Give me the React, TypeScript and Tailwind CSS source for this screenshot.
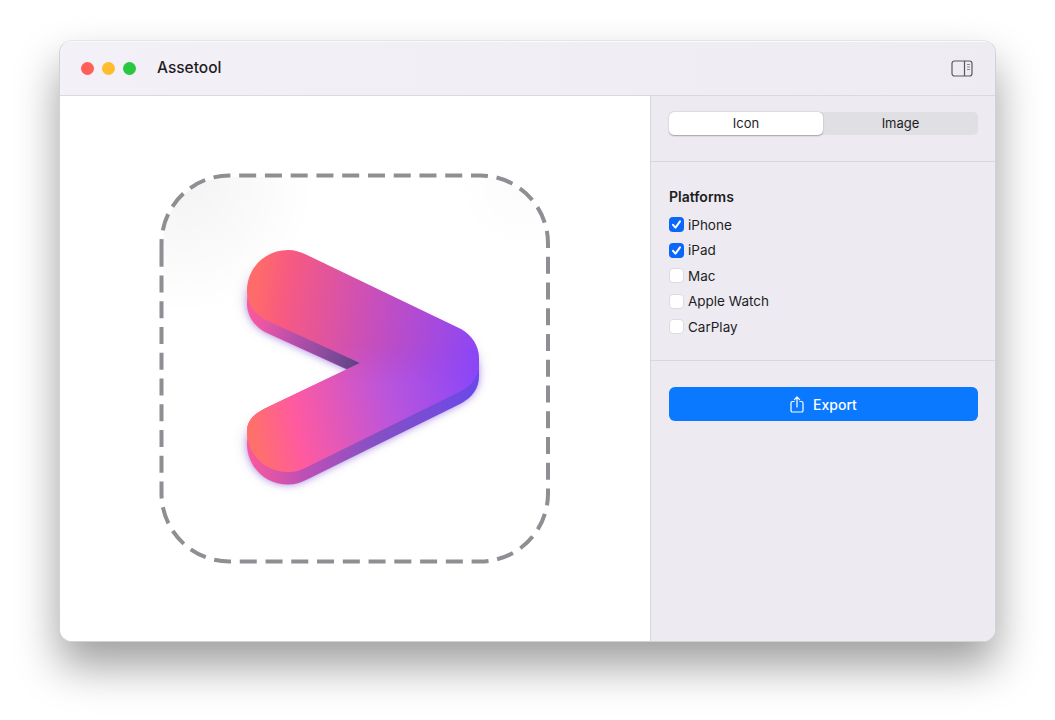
import React from 'react';

const FACE =
  'M247 291C247 268 265 250 288 250C295 250 301 252 307 255L461 329C472 335 479 346 479 358V364C479 376 472 385 461 391L307 467C301 470 295 472 288 472C265 472 247 454 247 431C247 420 255 413 268 407L360 363L268 321C255 315 247 304 247 291Z';

// starts on the left side so the seam of the dashes falls where the original has it
const DASH_OUTLINE =
  'M161.5 256V243.5A68 68 0 0 1 229.5 175.5H480A68 68 0 0 1 548 243.5V493.5A68 68 0 0 1 480 561.5H229.5A68 68 0 0 1 161.5 493.5Z';

const PLATFORMS = [
  { name: 'iPhone', checked: true },
  { name: 'iPad', checked: true },
  { name: 'Mac', checked: false },
  { name: 'Apple Watch', checked: false },
  { name: 'CarPlay', checked: false },
];

const ArtworkDrop: React.FC = () => (
  <svg width="590" height="545" viewBox="60 96 590 545" className="block">
    <defs>
      <linearGradient id="face" gradientUnits="userSpaceOnUse" x1="250" y1="340" x2="480" y2="370">
        <stop offset="0" stopColor="#ff6a6a" />
        <stop offset="0.12" stopColor="#f85a80" />
        <stop offset="0.5" stopColor="#c94fba" />
        <stop offset="1" stopColor="#8a46f8" />
      </linearGradient>
      <linearGradient id="faceLow" gradientUnits="userSpaceOnUse" x1="250" y1="430" x2="480" y2="385">
        <stop offset="0" stopColor="#ff7168" />
        <stop offset="0.2" stopColor="#ff5aa0" />
        <stop offset="0.6" stopColor="#bb55db" />
        <stop offset="1" stopColor="#8a46f8" />
      </linearGradient>
      <linearGradient id="faceMask" gradientUnits="userSpaceOnUse" x1="0" y1="345" x2="0" y2="385">
        <stop offset="0" stopColor="#fff" stopOpacity="0" />
        <stop offset="1" stopColor="#fff" stopOpacity="1" />
      </linearGradient>
      <mask id="lowerHalf" maskUnits="userSpaceOnUse" x="200" y="200" width="320" height="320">
        <rect x="200" y="200" width="320" height="320" fill="url(#faceMask)" />
      </mask>
      <linearGradient id="side" gradientUnits="userSpaceOnUse" x1="250" y1="400" x2="480" y2="400">
        <stop offset="0" stopColor="#f9589c" />
        <stop offset="0.22" stopColor="#c050b4" />
        <stop offset="0.55" stopColor="#8450c4" />
        <stop offset="1" stopColor="#6a48ea" />
      </linearGradient>
      <linearGradient id="notchWall" gradientUnits="userSpaceOnUse" x1="260" y1="330" x2="355" y2="365">
        <stop offset="0" stopColor="#b850a8" stopOpacity="0" />
        <stop offset="1" stopColor="#5f4585" />
      </linearGradient>
      <radialGradient id="cornerLeft" gradientUnits="userSpaceOnUse" cx="185" cy="185" r="130">
        <stop offset="0" stopColor="#000" stopOpacity="0.045" />
        <stop offset="1" stopColor="#000" stopOpacity="0" />
      </radialGradient>
      <radialGradient id="cornerRight" gradientUnits="userSpaceOnUse" cx="525" cy="185" r="70">
        <stop offset="0" stopColor="#000" stopOpacity="0.015" />
        <stop offset="1" stopColor="#000" stopOpacity="0" />
      </radialGradient>
      <filter id="soft" x="-30%" y="-30%" width="160%" height="160%">
        <feGaussianBlur stdDeviation="7" />
      </filter>
      <filter id="tight" x="-20%" y="-20%" width="140%" height="140%">
        <feGaussianBlur stdDeviation="3" />
      </filter>
    </defs>

    <rect x="163" y="177" width="383" height="383" rx="66" fill="url(#cornerLeft)" />
    <rect x="163" y="177" width="383" height="383" rx="66" fill="url(#cornerRight)" />
    <path d={DASH_OUTLINE} fill="none" stroke="#8e8e93" strokeWidth="4" strokeDasharray="17 8.76" />

    <path d={FACE} transform="translate(-1 10)" fill="#6b3fa0" opacity="0.28" filter="url(#soft)" />
    <path d={FACE} transform="translate(0 13)" fill="#7a45e0" opacity="0.45" filter="url(#tight)" />
    <path d={FACE} transform="translate(0 12.5)" fill="url(#side)" />
    <path d="M258 312L360 363L347 369L266 332Z" fill="url(#notchWall)" />
    <path d={FACE} fill="url(#face)" />
    <path d={FACE} fill="url(#faceLow)" mask="url(#lowerHalf)" />
  </svg>
);

const App: React.FC = () => (
  <div className="h-[720px] w-full overflow-hidden bg-white pl-[59px] pt-[40px] font-['Inter','Liberation_Sans',sans-serif] text-[#1d1d1f]">
    <div className="flex h-[602px] w-[937px] flex-col overflow-hidden rounded-[13px] border border-[#d2d2d4] border-t-[#e4e4e6] bg-white shadow-[0_24px_44px_rgba(0,0,0,0.38)]">
      <header className="flex h-[55px] shrink-0 items-center border-b border-[#dbd9df] bg-gradient-to-r from-[#f3f1f7] to-[#eeecf2] pl-[21px] pr-[22px] shadow-[inset_0_1px_0_#fbfafc]">
        <div className="flex gap-[8px]">
          <span className="size-[13px] rounded-full bg-[#ff5f57]" />
          <span className="size-[13px] rounded-full bg-[#febc2e]" />
          <span className="size-[13px] rounded-full bg-[#28c840]" />
        </div>
        <h1 className="ml-[21px] text-[15.5px] font-medium leading-none">Assetool</h1>
        <svg width="22" height="17" viewBox="0 0 22 17" fill="none" className="ml-auto">
          <rect x="1" y="1" width="20" height="15" rx="2.5" stroke="#58585c" strokeWidth="1.2" />
          <path d="M13.5 1v15" stroke="#58585c" strokeWidth="1.2" />
          <path d="M16 4.5h3M16 7h3M16 9.5h3" stroke="#8a8a8f" strokeWidth="1" />
        </svg>
      </header>

      <div className="flex min-h-0 flex-1">
        <main className="w-[590px] shrink-0 bg-white">
          <ArtworkDrop />
        </main>

        <aside className="flex-1 border-l border-[#d8d6dc] bg-[#edebf1]">
          <section className="h-[66px] border-b border-[#d9d7dd] pl-[18px] pr-[17px] pt-[16px]">
            <div className="flex h-[23px] rounded-[5px] bg-[#e0dfe4] text-[13px] leading-none">
              <button className="flex h-full w-[154px] items-center justify-center rounded-[5px] bg-white shadow-[0_0.5px_1.5px_rgba(0,0,0,0.32)]">
                Icon
              </button>
              <button className="flex h-full flex-1 items-center justify-center">Image</button>
            </div>
          </section>

          <section className="h-[199px] border-b border-[#d9d7dd] pl-[18px] pr-[17px] pt-[27px]">
            <h2 className="text-[14px] font-semibold leading-[16px]">Platforms</h2>
            <ul className="mt-[7px]">
              {PLATFORMS.map((p) => (
                <li key={p.name} className="flex h-[25.5px] items-center gap-[4px] text-[13.5px]">
                  {p.checked ? (
                    <span className="flex size-[15px] items-center justify-center rounded-[4px] bg-[#0b66fa]">
                      <svg width="11" height="11" viewBox="0 0 11 11" fill="none">
                        <path d="M2 5.8 4.5 8.6 9 2.4" stroke="#fff" strokeWidth="2" strokeLinecap="round" strokeLinejoin="round" />
                      </svg>
                    </span>
                  ) : (
                    <span className="size-[15px] rounded-[4px] border border-[#dcdbe0] bg-white" />
                  )}
                  {p.name}
                </li>
              ))}
            </ul>
          </section>

          <section className="pl-[18px] pr-[17px] pt-[26px]">
            <button className="flex h-[34px] w-full items-center justify-center gap-[9px] rounded-[6px] bg-[#0a78ff] text-[14px] font-medium text-white">
              <svg width="14" height="17" viewBox="0 0 14 17" fill="none" stroke="#fff" strokeWidth="1.2">
                <path d="M4.5 5.5H2.6A1.6 1.6 0 0 0 1 7.1v7.3A1.6 1.6 0 0 0 2.6 16h8.8a1.6 1.6 0 0 0 1.6-1.6V7.1a1.6 1.6 0 0 0-1.6-1.6H9.5" />
                <path d="M7 11V1.2M4.4 3.6 7 1l2.6 2.6" strokeLinecap="round" strokeLinejoin="round" />
              </svg>
              Export
            </button>
          </section>
        </aside>
      </div>
    </div>
  </div>
);

export default App;
